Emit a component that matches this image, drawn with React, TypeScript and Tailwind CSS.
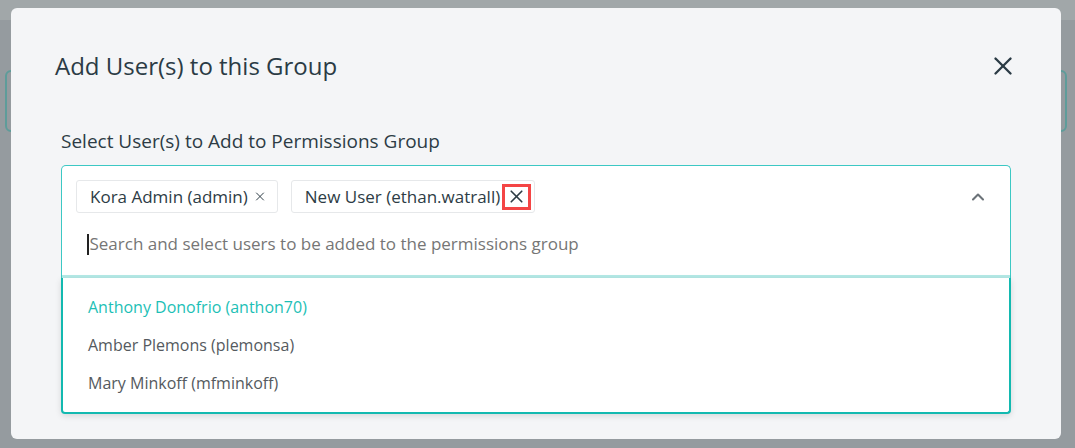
import { X, ChevronUp } from "lucide-react";

const font = { fontFamily: '"Open Sans", "Noto Sans", sans-serif' };

function Tag({ label, marked }: { label: string; marked?: boolean }) {
  return (
    <div className="flex h-[33px] items-center rounded-[3px] border border-[#e6e8ea] bg-white pl-[13px] pr-[3px] text-[17px] text-[#2d3c45]">
      <span>{label}</span>
      {marked ? (
        <span className="ml-[2px] flex h-[26px] w-[29px] items-center justify-center border-[3px] border-[#f44545]">
          <X size={21} strokeWidth={1.9} className="text-[#2d3c45]" />
        </span>
      ) : (
        <span className="ml-[5px] mr-[7px] flex h-[26px] w-[14px] items-center justify-center">
          <X size={21} strokeWidth={1.7} className="text-[#2d3c45]" />
        </span>
      )}
    </div>
  );
}

export default function App() {
  return (
    <div className="relative h-[448px] w-[1075px] overflow-hidden bg-[#959b9f]" style={font}>
      <div className="absolute left-0 top-0 h-[20px] w-full bg-[#a1a7a9]" />
      <div className="absolute left-[5px] top-[70px] h-[62px] w-[20px] rounded-[6px] border-2 border-[#5e9c9a]" />
      <div className="absolute right-[8px] top-[70px] h-[62px] w-[20px] rounded-[6px] border-2 border-[#5e9c9a]" />
      <div className="absolute left-[11px] top-[8px] h-[431px] w-[1050px] rounded-[6px] bg-[#f4f5f7]">
        <div className="flex items-center justify-between pl-[44px] pr-[43px] pt-[42px]">
          <h1 className="text-[24px] leading-[32px] text-[#2b3b45]">Add User(s) to this Group</h1>
          <X size={30} strokeWidth={1.9} className="text-[#2b3b45]" />
        </div>
        <div className="px-[50px] pt-[46px]">
          <div className="text-[19px] leading-[26px] text-[#2d3c45]">
            Select User(s) to Add to Permissions Group
          </div>
          <div className="mt-[11px] rounded-t-[5px] border border-b-0 border-[#3cc8c4] bg-white">
            <div className="flex items-start justify-between pl-[14px] pr-[22px] pt-[14px]">
              <div className="flex gap-[13px]">
                <Tag label="Kora Admin (admin)" />
                <Tag label="New User (ethan.watrall)" marked />
              </div>
              <ChevronUp size={20} strokeWidth={2.5} className="mt-[7px] text-[#6b7278]" />
            </div>
            <div className="flex h-[62px] items-center pl-[25px] text-[17px] text-[#767676]">
              <span className="mr-[1px] inline-block h-[21px] w-[1.5px] bg-[#222]" />
              Search and select users to be added to the permissions group
            </div>
            <div className="h-[3px] bg-[#b4e9e6]" />
          </div>
          <div className="rounded-b-[4px] border-2 border-t-0 border-[#13b9b0] bg-white pb-[10px] pt-[10px] text-[16px] shadow-[0_2px_6px_rgba(0,0,0,0.12)]">
            <div className="flex h-[38px] items-center pl-[25px] text-[#1cbfb6]">Anthony Donofrio (anthon70)</div>
            <div className="flex h-[38px] items-center pl-[25px] text-[#555a5e]">Amber Plemons (plemonsa)</div>
            <div className="flex h-[38px] items-center pl-[25px] text-[#555a5e]">Mary Minkoff (mfminkoff)</div>
          </div>
        </div>
      </div>
    </div>
  );
}
